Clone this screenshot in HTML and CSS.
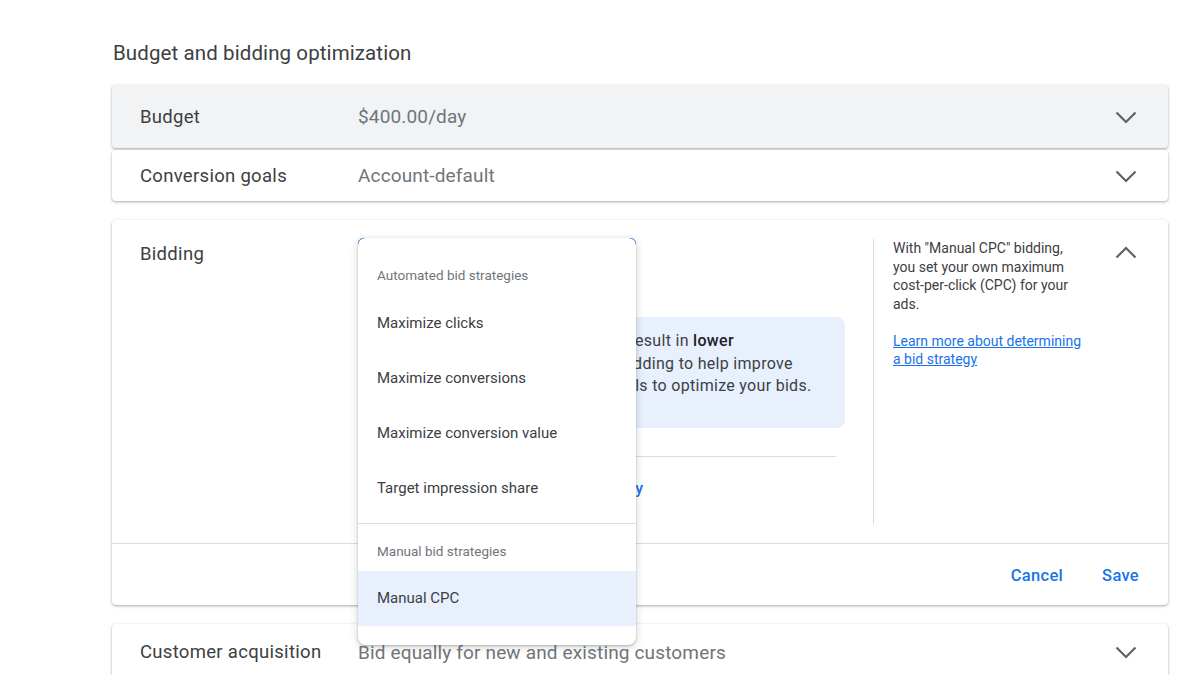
FILE: index.html
```html
<!DOCTYPE html>
<html>
<head>
<meta charset="utf-8">
<link rel="stylesheet" href="styles.css">
</head>
<body>
<div class="page">
  <h1 class="title">Budget and bidding optimization</h1>

  <div class="card row hovered">
    <div class="label">Budget</div>
    <div class="value">$400.00/day</div>
    <svg class="chev" viewBox="0 0 24 24"><path d="M2.5 7.5l9.5 9.5 9.5-9.5"/></svg>
  </div>
  <div class="card row thin">
    <div class="label">Conversion goals</div>
    <div class="value">Account-default</div>
    <svg class="chev" viewBox="0 0 24 24"><path d="M2.5 7.5l9.5 9.5 9.5-9.5"/></svg>
  </div>

  <div class="card bidding">
    <div class="bid-body">
      <div class="label bid-label">Bidding</div>
      <div class="bid-content">
        <div class="select"></div>
        <div class="info">
          <div>Manual CPC bidding may result in <b>lower</b></div>
          <div>performance. Try Smart bidding to help improve</div>
          <div>results. Google uses signals to optimize your bids.</div>
        </div>
        <div class="sep"></div>
        <a class="alt-link">Learn more about bid strategy</a>
        <div class="menu">
          <div class="menu-head">Automated bid strategies</div>
          <div class="menu-item">Maximize clicks</div>
          <div class="menu-item">Maximize conversions</div>
          <div class="menu-item">Maximize conversion value</div>
          <div class="menu-item">Target impression share</div>
          <div class="menu-div"></div>
          <div class="menu-head small">Manual bid strategies</div>
          <div class="menu-item selected">Manual CPC</div>
        </div>
      </div>
      <div class="help">
        <p>With "Manual CPC" bidding, you set your own maximum cost-per-click (CPC) for your ads.</p>
        <a class="help-link">Learn more about determining a bid strategy</a>
      </div>
      <svg class="chev up" viewBox="0 0 24 24"><path d="M2.5 16.5l9.5-9.5 9.5 9.5"/></svg>
    </div>
    <div class="bid-foot">
      <span class="btn">Cancel</span>
      <span class="btn">Save</span>
    </div>
  </div>

  <div class="card row last">
    <div class="label">Customer acquisition</div>
    <div class="value">Bid equally for new and existing customers</div>
    <svg class="chev" viewBox="0 0 24 24"><path d="M2.5 7.5l9.5 9.5 9.5-9.5"/></svg>
  </div>
</div>
</body>
</html>
```
FILE: styles.css
```css
html, body {
  margin: 0;
  padding: 0;
  background: #ffffff;
  font-family: Roboto, "Liberation Sans", sans-serif;
  color: #3c4043;
  overflow: hidden;
}
.page {
  width: 1056px;
  margin-left: 112px;
  padding-top: 40px;
  height: 675px;
}
.title {
  margin: 0 0 0 1px;
  font-size: 20.5px;
  font-weight: 400;
  letter-spacing: 0.1px;
  line-height: 26px;
  color: #3c4043;
  height: 45px;
}
.card {
  background: #fff;
  border-radius: 4px;
  box-shadow: 0 1px 2px rgba(60,64,67,0.3), 0 1px 3px 1px rgba(60,64,67,0.12);
}
.row {
  display: flex;
  align-items: center;
  padding: 0 30px 0 28px;
}
.hovered {
  height: 63px;
  background: #f1f3f4;
}
.thin {
  height: 51px;
  margin-top: 2px;
}
.label {
  width: 218px;
  flex: none;
  font-size: 18.5px;
  letter-spacing: 0.3px;
  color: #3c4043;
}
.value {
  flex: 1;
  font-size: 19px;
  letter-spacing: 0.15px;
  color: #70757a;
}
.chev {
  width: 24px;
  height: 24px;
  flex: none;
  fill: none;
  stroke: #5f6368;
  stroke-width: 2.2;
}
.bidding {
  margin-top: 19px;
  height: 385px;
  display: flex;
  flex-direction: column;
}
.bid-body {
  height: 324px;
  display: flex;
  padding: 0 30px 0 28px;
  border-bottom: 1px solid #dadce0;
  box-sizing: border-box;
}
.bid-label {
  padding-top: 23px;
}
.bid-content {
  position: relative;
  width: 478px;
  flex: none;
  padding-top: 18px;
}
.select {
  width: 276px;
  height: 47px;
  border: 1px solid #1a73e8;
  border-radius: 5px;
}
.info {
  margin-top: 30px;
  margin-left: 66px;
  width: 421px;
  height: 111px;
  box-sizing: border-box;
  background: #e8f0fe;
  border-radius: 8px;
  padding: 13px 0 0 16px;
  font-size: 16px;
  letter-spacing: 0.3px;
  line-height: 22.5px;
  color: #3c4043;
  white-space: nowrap;
  overflow: hidden;
}
.info b { font-weight: 500; color: #202124; }
.sep {
  margin-top: 28px;
  width: 478px;
  border-top: 1px solid #dadce0;
}
.alt-link {
  display: block;
  margin-top: 22px;
  font-size: 16px;
  font-weight: 500;
  color: #1a73e8;
  width: 285px;
  text-align: right;
}
.menu {
  position: absolute;
  left: 0;
  top: 18px;
  width: 278px;
  height: 407px;
  background: #fff;
  border-radius: 8px;
  box-shadow: 0 2px 6px 2px rgba(60,64,67,0.15), 0 1px 2px rgba(60,64,67,0.3);
  padding-top: 19px;
  box-sizing: border-box;
  overflow: hidden;
}
.menu-head {
  height: 39px;
  padding-left: 19px;
  font-size: 13.5px;
  line-height: 37px;
  color: #70757a;
}
.menu-item {
  height: 55px;
  line-height: 55px;
  padding-left: 19px;
  font-size: 15px;
  color: #3c4043;
}
.menu-div {
  margin-top: 7px;
  border-top: 1px solid #dadce0;
}
.menu-head.small {
  height: 47px;
  line-height: 54px;
}
.menu-item.selected {
  background: #e8f0fe;
}
.help {
  margin-left: 37px;
  margin-top: 19px;
  height: 285px;
  width: 215px;
  flex: none;
  border-left: 1px solid #dadce0;
  padding-left: 19px;
  box-sizing: border-box;
  font-size: 14px;
  line-height: 18.5px;
  color: #3c4043;
}
.help p { margin: 0 0 18.5px 0; padding-right: 8px; }
.help-link {
  color: #1a73e8;
  text-decoration: underline;
}
.chev.up {
  margin-left: auto;
  margin-top: 21px;
}
.bid-foot {
  flex: 1;
  display: flex;
  justify-content: flex-end;
  align-items: center;
  gap: 39px;
  padding-right: 29px;
  padding-top: 2px;
}
.btn {
  font-size: 16.5px;
  font-weight: 500;
  letter-spacing: 0.3px;
  color: #1a73e8;
}
.last {
  margin-top: 19px;
  height: 56px;
  align-items: center;
  padding-bottom: 2px;
}
```
